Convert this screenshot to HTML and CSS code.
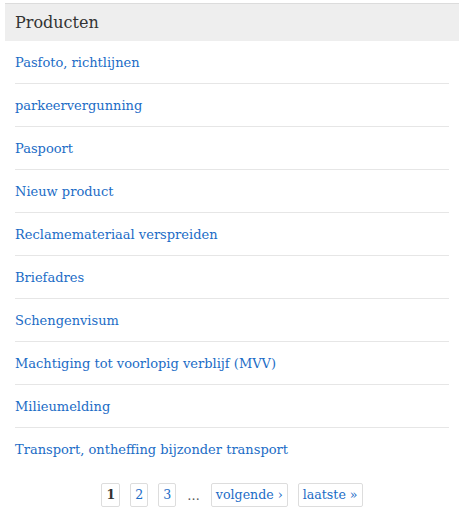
FILE: index.html
```html
<!DOCTYPE html>
<html lang="nl">
<head>
<meta charset="utf-8">
<link rel="stylesheet" href="styles.css">
</head>
<body>
<div class="block">
  <h2 class="block-title">Producten</h2>
  <ul class="items">
    <li><a href="#">Pasfoto, richtlijnen</a></li>
    <li><a href="#">parkeervergunning</a></li>
    <li><a href="#">Paspoort</a></li>
    <li><a href="#">Nieuw product</a></li>
    <li><a href="#">Reclamemateriaal verspreiden</a></li>
    <li><a href="#">Briefadres</a></li>
    <li><a href="#">Schengenvisum</a></li>
    <li><a href="#">Machtiging tot voorlopig verblijf (MVV)</a></li>
    <li><a href="#">Milieumelding</a></li>
    <li><a href="#">Transport, ontheffing bijzonder transport</a></li>
  </ul>
  <nav class="pager">
    <span class="page current">1</span>
    <a class="page" href="#">2</a>
    <a class="page" href="#">3</a>
    <span class="ellipsis">…</span>
    <a class="page" href="#">volgende ›</a>
    <a class="page" href="#">laatste »</a>
  </nav>
</div>
</body>
</html>
```
FILE: styles.css
```css
html, body {
  margin: 0;
  padding: 0;
  background: #fff;
}
body {
  font-family: "DejaVu Serif", "Liberation Serif", serif;
  color: #333;
}
.block {
  margin: 3px 2px 0 5px;
}
.block-title {
  margin: 0;
  border-top: 1px solid #dcdcdc;
  background: #eeeeee;
  font-size: 16px;
  font-weight: normal;
  line-height: 21px;
  padding: 8px 10px;
  color: #333;
}
.items {
  list-style: none;
  margin: 0 10px;
  padding: 0;
}
.items li {
  padding: 12px 0 10px;
  line-height: 20px;
  font-size: 13px;
  border-bottom: 1px solid #e6e6e6;
}
.items li:last-child {
  border-bottom: none;
}
.items a {
  color: #1b6cc6;
  text-decoration: none;
}
.pager {
  display: flex;
  justify-content: center;
  align-items: center;
  gap: 10px;
  margin-top: 13px;
  font-size: 12.6px;
}
.page {
  display: block;
  height: 22px;
  line-height: 22px;
  padding: 0 4px;
  border: 1px solid #dddddd;
  border-radius: 2px;
  color: #1b6cc6;
  text-decoration: none;
}
.page.current {
  color: #333;
  font-weight: bold;
}
.ellipsis {
  color: #555;
  padding: 0 1px;
}
```
